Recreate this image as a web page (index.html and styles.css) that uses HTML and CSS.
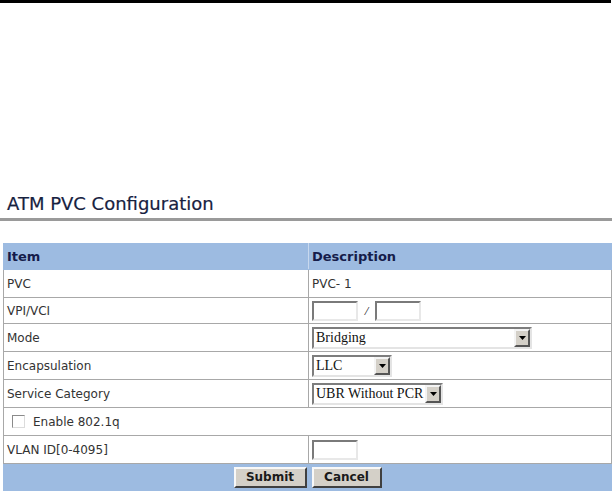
FILE: index.html
```html
<!DOCTYPE html>
<html>
<head>
<meta charset="utf-8">
<title>ATM PVC Configuration</title>
<link rel="stylesheet" href="styles.css">
</head>
<body>
<div class="topline"></div>
<h1 class="title">ATM PVC Configuration</h1>
<div class="rule"></div>
<table class="cfg">
  <tr class="head">
    <th class="c1">Item</th>
    <th class="c2">Description</th>
  </tr>
  <tr class="r28">
    <td class="c1">PVC</td>
    <td class="c2">PVC- 1</td>
  </tr>
  <tr class="r26">
    <td class="c1">VPI/VCI</td>
    <td class="c2"><div class="line"><input class="txt" type="text"><span class="slash">/</span><input class="txt" type="text"></div></td>
  </tr>
  <tr class="r28">
    <td class="c1">Mode</td>
    <td class="c2"><div class="sel w-mode"><span class="val">Bridging</span><span class="arrow"><svg width="7" height="4" viewBox="0 0 7 4"><path d="M0 0H7L3.5 4Z" fill="#000"/></svg></span></div></td>
  </tr>
  <tr class="r28">
    <td class="c1">Encapsulation</td>
    <td class="c2"><div class="sel w-enc"><span class="val">LLC</span><span class="arrow"><svg width="7" height="4" viewBox="0 0 7 4"><path d="M0 0H7L3.5 4Z" fill="#000"/></svg></span></div></td>
  </tr>
  <tr class="r28">
    <td class="c1">Service Category</td>
    <td class="c2"><div class="sel w-svc"><span class="val">UBR Without PCR</span><span class="arrow"><svg width="7" height="4" viewBox="0 0 7 4"><path d="M0 0H7L3.5 4Z" fill="#000"/></svg></span></div></td>
  </tr>
  <tr class="r28">
    <td class="full" colspan="2"><div class="line chk-line"><span class="chk"></span><span>Enable 802.1q</span></div></td>
  </tr>
  <tr class="r28">
    <td class="c1">VLAN ID[0-4095]</td>
    <td class="c2"><input class="txt" type="text"></td>
  </tr>
  <tr class="btnrow">
    <td colspan="2"><div class="btns"><button class="btn b-submit">Submit</button><button class="btn b-cancel">Cancel</button></div></td>
  </tr>
</table>
</body>
</html>
```
FILE: styles.css
```css
html, body {
  margin: 0;
  padding: 0;
  background: #fff;
}
body {
  font-family: "DejaVu Sans", Verdana, sans-serif;
  color: #333;
}
.topline {
  height: 3px;
  width: 611px;
  background: #000;
}
.title {
  margin: 190px 0 0 7px;
  font-size: 18px;
  line-height: 21px;
  font-weight: normal;
  color: #17223f;
  -webkit-text-stroke: 0.2px #17223f;
}
.rule {
  margin-top: 4px;
  height: 3px;
  width: 612px;
  background: #9a9a9a;
}
.cfg {
  margin: 22px 0 0 3px;
  width: 609px;
  border-collapse: collapse;
  font-size: 12px;
}
.cfg th, .cfg td {
  padding: 0 0 0 3px;
  border: 1px solid #a8a8a8;
  text-align: left;
  vertical-align: middle;
}
.cfg .c1 { width: 301px; }
.head th {
  height: 25px;
  background: #9dbbe1;
  color: #151c4a;
  font-size: 13px;
  font-weight: bold;
  border-color: #9dbbe1;
  border-right-color: #c8d8ee;
}
.head th.c2 { border-right-color: #9dbbe1; }
.r28 td { height: 27px; }
.r26 td { height: 25px; }
.line {
  display: flex;
  align-items: center;
}
.txt {
  box-sizing: border-box;
  width: 46px;
  height: 20px;
  margin: 0;
  padding: 0;
  border: 2px solid;
  border-color: #7a7a7a #e8e8e8 #e8e8e8 #7a7a7a;
  background: #fff;
  display: block;
}
.slash {
  width: 17px;
  text-align: center;
  font-family: "Liberation Serif", serif;
  font-style: italic;
  font-size: 13px;
  color: #222;
}
.sel {
  box-sizing: border-box;
  height: 22px;
  display: flex;
  align-items: stretch;
  border: 2px solid;
  border-color: #7d7d7d #e4e4e4 #e4e4e4 #7d7d7d;
  background: #fff;
}
.w-mode { width: 220px; }
.w-enc { width: 80px; }
.w-svc { width: 131px; }
.sel .val {
  flex: 1;
  font-family: "Liberation Serif", "Times New Roman", serif;
  font-size: 14px;
  color: #111;
  line-height: 18px;
  padding-left: 2px;
  white-space: nowrap;
  overflow: hidden;
}
.sel .arrow {
  box-sizing: border-box;
  width: 16px;
  background: #d4d0c8;
  border: 2px solid;
  border-color: #f4f4f4 #555 #555 #f4f4f4;
  display: flex;
  align-items: center;
  justify-content: center;
}
.full { padding-left: 8px !important; }
.chk-line { gap: 8px; }
.chk {
  box-sizing: border-box;
  width: 13px;
  height: 13px;
  border: 1px solid;
  border-color: #8a8a8a #dcdcdc #dcdcdc #8a8a8a;
  background: #fff;
}
.btnrow td {
  height: 26px;
  background: #9dbbe1;
  border-color: #9dbbe1;
  padding: 0;
}
.btns {
  display: flex;
  justify-content: center;
  gap: 5px;
}
.btn {
  box-sizing: border-box;
  height: 21px;
  margin: 0;
  padding: 0;
  background: #d4d0c8;
  border: 2px solid;
  border-color: #f8f8f8 #404040 #404040 #f8f8f8;
  font-family: "DejaVu Sans", Verdana, sans-serif;
  font-weight: bold;
  font-size: 12px;
  color: #1a1a1a;
}
.b-submit { width: 73px; }
.b-cancel { width: 70px; }
```
